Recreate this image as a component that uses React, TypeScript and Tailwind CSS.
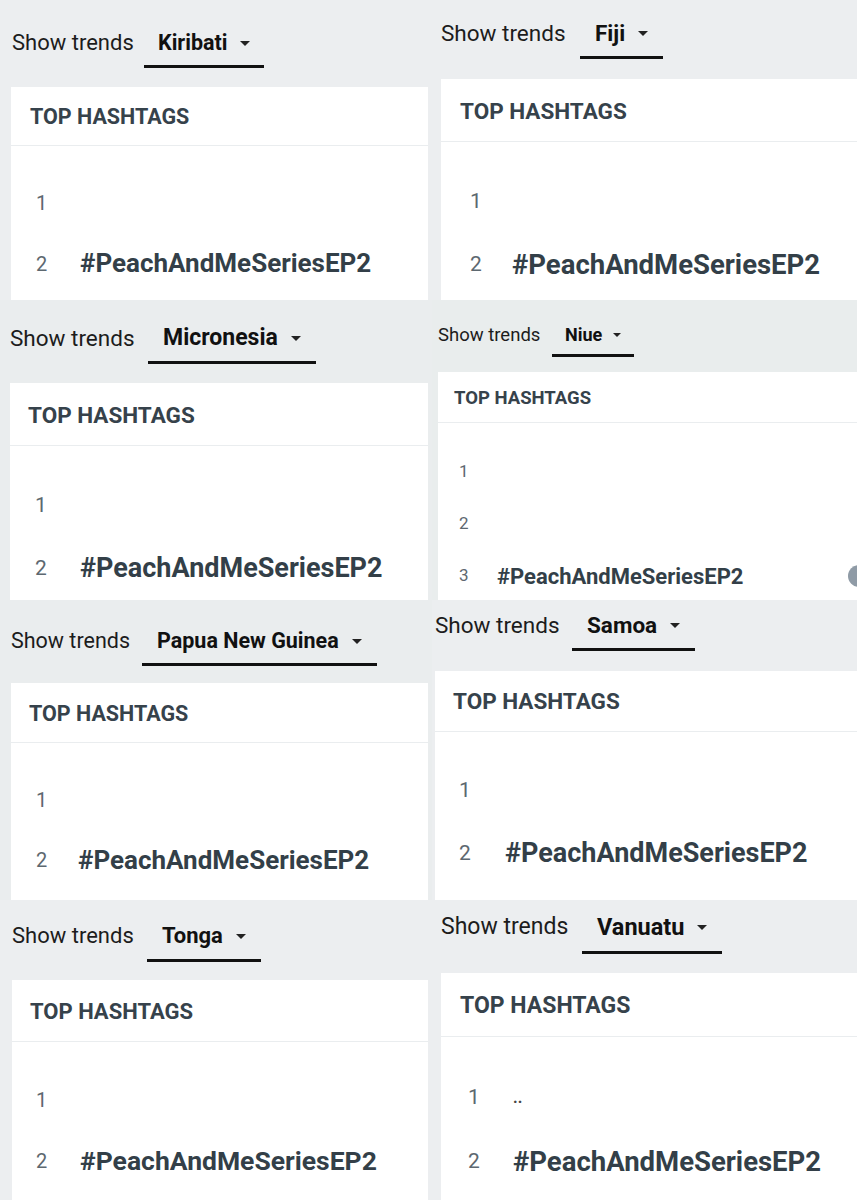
import React from "react";

type TileConfig = {
  country: string;
  wrap: string;
  bar: string;
  label: string;
  drop: string;
  dropText: string;
  caret: string;
  card: string;
  head: string;
  list: string;
  row: string;
  num: string;
  tag: string;
  items: string[];
  dot?: boolean;
};

const TAG = "#PeachAndMeSeriesEP2";

const tiles: TileConfig[] = [
  {
    country: "Kiribati",
    wrap: "bg-[#eceef0]",
    bar: "pt-[29px] pl-[12px]",
    label: "w-[132px] text-[22px]",
    drop: "px-[14px] pb-[8px]",
    dropText: "text-[21.5px]",
    caret: "ml-[12px] w-[10px]",
    card: "mt-[19px] ml-[11px] mr-[4px]",
    head: "h-[59px] pt-[3px] pl-[19px] text-[21.5px]",
    list: "pt-[26px]",
    row: "h-[61px] pl-[25px]",
    num: "w-[44px] text-[20px]",
    tag: "text-[26px]",
    items: ["", TAG],
  },
  {
    country: "Fiji",
    wrap: "bg-[#eceef0]",
    bar: "pt-[19px] pl-[9px]",
    label: "w-[139px] text-[22.5px]",
    drop: "px-[15px] pb-[9px]",
    dropText: "text-[22.5px]",
    caret: "ml-[13px] w-[10px]",
    card: "mt-[20px] ml-[9px]",
    head: "h-[63px] pt-[3px] pl-[19px] text-[22.5px]",
    list: "pt-[28px]",
    row: "h-[63px] pl-[29px]",
    num: "w-[42px] text-[21px]",
    tag: "text-[27.5px]",
    items: ["", TAG],
  },
  {
    country: "Micronesia",
    wrap: "bg-[#eaedee]",
    bar: "pt-[24px] pl-[10px]",
    label: "w-[138px] text-[22.5px]",
    drop: "px-[15px] pb-[9px]",
    dropText: "text-[23px]",
    caret: "ml-[13px] w-[10px]",
    card: "mt-[19px] ml-[10px] mr-[4px]",
    head: "h-[63px] pt-[3px] pl-[18px] text-[22.5px]",
    list: "pt-[28px]",
    row: "h-[63px] pl-[25px]",
    num: "w-[45px] text-[21px]",
    tag: "text-[27px]",
    items: ["", TAG],
  },
  {
    country: "Niue",
    wrap: "bg-[#e9eded]",
    bar: "pt-[21px] pl-[6px]",
    label: "w-[114px] text-[18.5px]",
    drop: "px-[13px] pb-[5px]",
    dropText: "text-[18px]",
    caret: "ml-[11px] w-[8px]",
    card: "mt-[15px] ml-[6px]",
    head: "h-[51px] pt-[3px] pl-[16px] text-[18.5px]",
    list: "pt-[23px]",
    row: "h-[52px] pl-[21px]",
    num: "w-[38px] text-[17px]",
    tag: "text-[22px]",
    items: ["", "", TAG],
    dot: true,
  },
  {
    country: "Papua New Guinea",
    wrap: "bg-[#eaedee]",
    bar: "pt-[27px] pl-[11px]",
    label: "w-[131px] text-[21.5px]",
    drop: "px-[15px] pb-[8px]",
    dropText: "text-[21.5px]",
    caret: "ml-[13px] w-[10px]",
    card: "mt-[17px] ml-[11px] mr-[4px]",
    head: "h-[60px] pt-[4px] pl-[18px] text-[21.5px]",
    list: "pt-[27px]",
    row: "h-[60px] pl-[25px]",
    num: "w-[42px] text-[20px]",
    tag: "text-[26px]",
    items: ["", TAG],
  },
  {
    country: "Samoa",
    wrap: "bg-[#eceef0]",
    bar: "pt-[11px] pl-[3px]",
    label: "w-[137px] text-[22.5px]",
    drop: "px-[15px] pb-[9px]",
    dropText: "text-[22.5px]",
    caret: "ml-[13px] w-[10px]",
    card: "mt-[20px] ml-[3px]",
    head: "h-[61px] pt-[1px] pl-[18px] text-[22.5px]",
    list: "pt-[27px]",
    row: "h-[63px] pl-[24px]",
    num: "w-[46px] text-[21px]",
    tag: "text-[27px]",
    items: ["", TAG],
  },
  {
    country: "Tonga",
    wrap: "bg-[#eceef0]",
    bar: "pt-[22px] pl-[12px]",
    label: "w-[135px] text-[22px]",
    drop: "px-[15px] pb-[9px]",
    dropText: "text-[22px]",
    caret: "ml-[13px] w-[10px]",
    card: "mt-[18px] ml-[12px] mr-[4px]",
    head: "h-[62px] pt-[2px] pl-[18px] text-[22px]",
    list: "pt-[27px]",
    row: "h-[61px] pl-[24px]",
    num: "w-[44px] text-[20px]",
    tag: "text-[26.5px]",
    items: ["", TAG],
  },
  {
    country: "Vanuatu",
    wrap: "bg-[#eceef0]",
    bar: "pt-[13px] pl-[9px]",
    label: "w-[141px] text-[23px]",
    drop: "px-[15px] pb-[10px]",
    dropText: "text-[23.5px]",
    caret: "ml-[13px] w-[10px]",
    card: "mt-[19px] ml-[9px]",
    head: "h-[64px] pt-[4px] pl-[19px] text-[23px]",
    list: "pt-[29px]",
    row: "h-[64px] pl-[27px]",
    num: "w-[45px] text-[21px]",
    tag: "text-[27.5px]",
    items: ["..", TAG],
  },
];

function Caret({ className }: { className: string }) {
  return (
    <svg viewBox="0 0 10 5" className={`${className} h-auto fill-[#222]`}>
      <path d="M0 0h10L5 5z" />
    </svg>
  );
}

function TrendTile({ t }: { t: TileConfig }) {
  return (
    <div className={`flex h-[300px] flex-col overflow-hidden ${t.wrap}`}>
      {/* Show trends + country picker */}
      <div className={`flex items-start leading-[28px] ${t.bar}`}>
        <span className={`shrink-0 text-[#1c1c1c] ${t.label}`}>Show trends</span>
        <div className={`flex items-center border-b-[3px] border-[#111] ${t.drop}`}>
          <span className={`font-bold text-[#111] ${t.dropText}`}>{t.country}</span>
          <Caret className={t.caret} />
        </div>
      </div>

      {/* Card */}
      <div className={`flex-1 overflow-hidden bg-white ${t.card}`}>
        <div className={`flex items-center border-b border-[#eaedef] font-bold text-[#36424b] ${t.head}`}>
          TOP HASHTAGS
        </div>
        <div className={t.list}>
          {t.items.map((item, i) => (
            <div key={i} className={`flex items-center ${t.row}`}>
              <span className={`shrink-0 text-[#5d6870] ${t.num}`}>{i + 1}</span>
              {item === TAG ? (
                <span className={`whitespace-nowrap font-bold text-[#333f48] ${t.tag}`}>{item}</span>
              ) : (
                <span className="text-[16px] font-bold leading-none text-[#444]">{item}</span>
              )}
              {t.dot && item === TAG && (
                <span className="-mr-[13px] ml-auto h-[22px] w-[22px] shrink-0 rounded-full bg-[#8f9ba6]" />
              )}
            </div>
          ))}
        </div>
      </div>
    </div>
  );
}

export default function App() {
  return (
    <div className="grid w-[857px] grid-cols-[432px_425px] bg-[#eceef0] font-['Roboto','Liberation_Sans',sans-serif]">
      {tiles.map((t) => (
        <TrendTile key={t.country} t={t} />
      ))}
    </div>
  );
}
